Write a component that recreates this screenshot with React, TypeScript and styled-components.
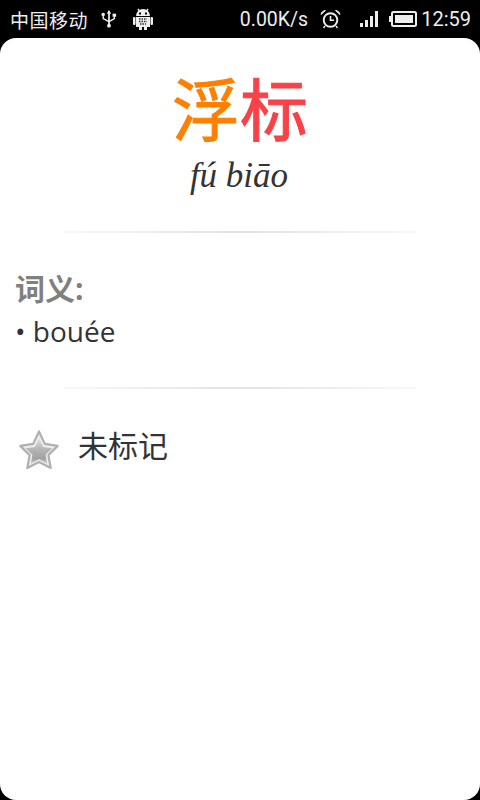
import React from 'react';
import styled, { createGlobalStyle } from 'styled-components';

const GlobalStyle = createGlobalStyle`
  html, body {
    margin: 0;
    padding: 0;
    background: #000;
  }
  body {
    font-family: 'Open Sans', 'Noto Sans CJK SC', sans-serif;
  }
`;

const Screen = styled.div`
  width: 480px;
  height: 800px;
  display: flex;
  flex-direction: column;
  background: #000;
  overflow: hidden;
`;

const StatusBar = styled.header`
  height: 38px;
  flex: none;
  display: flex;
  align-items: center;
  justify-content: space-between;
  padding: 0 9px 0 10px;
  color: #eee;
  font-family: Roboto, 'Noto Sans CJK SC', sans-serif;
  font-size: 19.5px;
`;

const StatusGroup = styled.div`
  display: flex;
  align-items: center;
`;

const Carrier = styled.span`
  font-size: 19px;
  letter-spacing: 0.5px;
  margin-right: 13px;
`;

const StatusIcon = styled.svg<{ $gap?: number }>`
  display: block;
  margin-right: ${props => props.$gap ?? 0}px;
`;

const Speed = styled.span`
  margin-right: 12px;
`;

const Clock = styled.span`
  margin-left: 4px;
  font-size: 20px;
`;

const Card = styled.main`
  flex: 1;
  background: #fff;
  border-radius: 16px;
  display: flex;
  flex-direction: column;
`;

const WordHead = styled.section`
  display: flex;
  flex-direction: column;
  align-items: center;
  padding-top: 29px;
`;

const Hanzi = styled.h1`
  margin: 0;
  font-family: 'Noto Sans CJK SC', sans-serif;
  font-size: 68px;
  line-height: 80px;
  font-weight: 400;
  -webkit-text-stroke: 1px currentColor;
  display: flex;
`;

const Char = styled.span<{ $color: string }>`
  color: ${props => props.$color};
`;

const Pinyin = styled.div`
  font-family: 'Liberation Serif', serif;
  font-style: italic;
  font-size: 35px;
  line-height: 38px;
  color: #333;
  margin-top: 10px;
  position: relative;
  left: -1px;
`;

const Divider = styled.hr<{ $top: number; $bottom: number }>`
  width: 352px;
  height: 2px;
  border: 0;
  flex: none;
  margin: ${props => props.$top}px auto ${props => props.$bottom}px;
  background: linear-gradient(90deg, #f8f8f8 0%, #e2e2e2 50%, #f8f8f8 100%);
`;

const Meaning = styled.section`
  padding: 0 15px;
`;

const MeaningLabel = styled.div`
  font-family: 'Open Sans', 'Noto Sans CJK SC', sans-serif;
  font-size: 30px;
  line-height: 40px;
  font-weight: 700;
  color: #808080;
`;

const MeaningItem = styled.div`
  font-size: 28px;
  line-height: 44px;
  color: #333;
`;

const MarkRow = styled.section`
  display: flex;
  align-items: center;
  padding-left: 19px;
  gap: 19px;
`;

const MarkLabel = styled.span`
  font-family: 'Noto Sans CJK SC', sans-serif;
  font-size: 30px;
  line-height: 40px;
  color: #333;
  position: relative;
  top: -7px;
`;

const UsbIcon = () => (
  <StatusIcon $gap={16} width="16" height="20" viewBox="0 0 18 20" fill="none" stroke="#eee">
    <path d="M9 1v17" strokeWidth="2" />
    <path d="M2.5 6v3.5L9 13l6-3.5V7" strokeWidth="1.6" />
    <circle cx="2.5" cy="5" r="2" fill="#eee" stroke="none" />
    <rect x="13" y="4" width="4" height="3.5" fill="#eee" stroke="none" />
    <path d="M9 0l2.5 4h-5z" fill="#eee" stroke="none" />
    <circle cx="9" cy="17.5" r="2.2" fill="#eee" stroke="none" />
  </StatusIcon>
);

const AndroidIcon = () => (
  <StatusIcon width="20" height="22" viewBox="0 0 20 22">
    <path d="M3 8a7 7 0 0 1 14 0z" fill="#eee" />
    <path d="M5 1l2 3M15 1l-2 3" stroke="#eee" strokeWidth="1.4" />
    <rect x="6" y="4.5" width="2" height="2" fill="#000" />
    <rect x="12" y="4.5" width="2" height="2" fill="#000" />
    <rect x="0" y="9" width="2.5" height="8" rx="1" fill="#eee" />
    <rect x="17.5" y="9" width="2.5" height="8" rx="1" fill="#eee" />
    <rect x="3" y="9" width="14" height="10" fill="#eee" />
    <rect x="6" y="19" width="3" height="3" fill="#eee" />
    <rect x="11" y="19" width="3" height="3" fill="#eee" />
    <path d="M6 11h8M6 13.5h8M7 16h6" stroke="#333" strokeWidth="1.4" strokeDasharray="1.5 1" />
  </StatusIcon>
);

const AlarmIcon = () => (
  <StatusIcon $gap={19} width="21" height="20" viewBox="0 0 21 20" fill="none" stroke="#eee">
    <circle cx="10.5" cy="11" r="6.8" strokeWidth="1.9" />
    <path d="M10.5 7v4.2h3.5" strokeWidth="1.6" />
    <path d="M1 5.5C1.5 3 3 1.8 5.5 1.5zM20 5.5C19.5 3 18 1.8 15.5 1.5z" fill="#eee" strokeWidth="1" />
    <path d="M5 17l-1.5 2M16 17l1.5 2" strokeWidth="1.4" />
  </StatusIcon>
);

const SignalIcon = () => (
  <StatusIcon $gap={11} width="18" height="16" viewBox="0 0 18 16" fill="#eee">
    <rect x="0" y="12" width="3" height="4" />
    <rect x="5" y="9" width="3" height="7" />
    <rect x="10" y="5" width="3" height="11" />
    <rect x="15" y="0" width="3" height="16" />
  </StatusIcon>
);

const BatteryIcon = () => (
  <StatusIcon width="28" height="16" viewBox="0 0 28 16" fill="none">
    <rect x="0" y="5" width="2" height="6" fill="#eee" />
    <rect x="3" y="1" width="24" height="14" rx="1.5" stroke="#eee" strokeWidth="2" />
    <rect x="6" y="4" width="18" height="8" fill="#eee" />
  </StatusIcon>
);

const StarIcon = () => (
  <svg width="40" height="41" viewBox="0 0 40 41" style={{ display: 'block' }}>
    <defs>
      <linearGradient id="starFill" x1="0" y1="0" x2="0" y2="1">
        <stop offset="0" stopColor="#e4e4e4" />
        <stop offset="0.45" stopColor="#b4b4b4" />
        <stop offset="0.8" stopColor="#a2a2a2" />
        <stop offset="1" stopColor="#cfcfcf" />
      </linearGradient>
    </defs>
    <path
      d="M20 1.500l5.800 12.400 12.900 2-9.300 9.200 2.300 12.900L20 32 8.300 38l2.300-12.900-9.300-9.200 12.900-2z"
      fill="#eeeeee"
      stroke="#b0b0b0"
      strokeWidth="2.200"
      strokeLinejoin="round"
    />
    <path
      d="M20 8l4.100 9 9.200 1.300-6.700 6.500 1.600 8.900-8.200-4.400-8.200 4.400 1.600-8.900-6.700-6.500 9.200-1.300z"
      fill="url(#starFill)"
      strokeLinejoin="round"
    />
  </svg>
);

export default function App() {
  return (
    <Screen>
      <GlobalStyle />
      <StatusBar>
        <StatusGroup>
          <Carrier>中国移动</Carrier>
          <UsbIcon />
          <AndroidIcon />
        </StatusGroup>
        <StatusGroup>
          <Speed>0.00K/s</Speed>
          <AlarmIcon />
          <SignalIcon />
          <BatteryIcon />
          <Clock>12:59</Clock>
        </StatusGroup>
      </StatusBar>
      <Card>
        <WordHead>
          <Hanzi>
            <Char $color="#ff8000">浮</Char>
            <Char $color="#f84248">标</Char>
          </Hanzi>
          <Pinyin>fú biāo</Pinyin>
        </WordHead>
        <Divider $top={36} $bottom={36} />
        <Meaning>
          <MeaningLabel>词义:</MeaningLabel>
          <MeaningItem>• bouée</MeaningItem>
        </Meaning>
        <Divider $top={34} $bottom={41} />
        <MarkRow>
          <StarIcon />
          <MarkLabel>未标记</MarkLabel>
        </MarkRow>
      </Card>
    </Screen>
  );
}
